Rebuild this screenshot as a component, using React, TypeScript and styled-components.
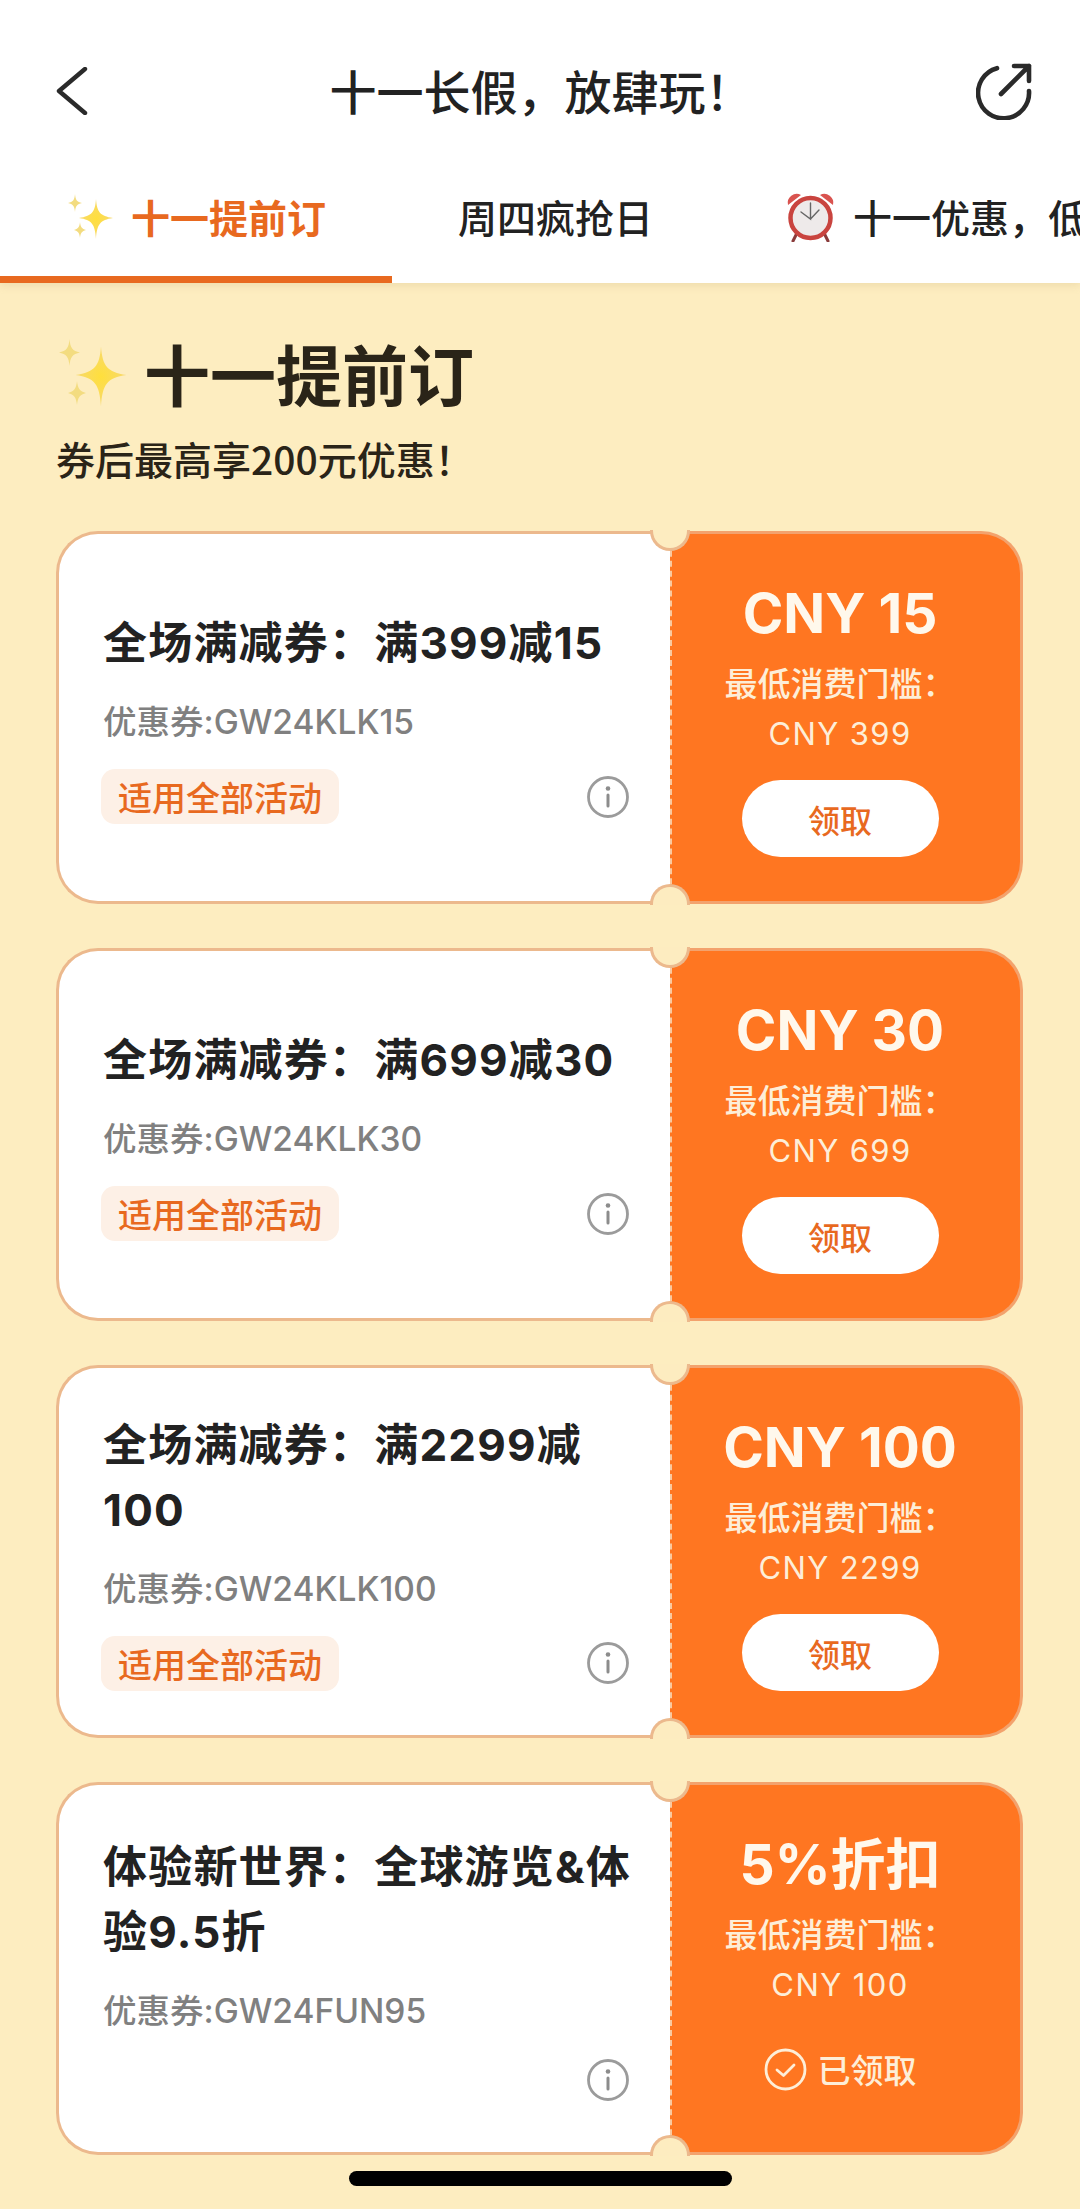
import React from "react";
import styled, { createGlobalStyle } from "styled-components";

const FONT = `Inter, "Noto Sans CJK SC", "Liberation Sans", sans-serif`;
const CJK = `"Noto Sans CJK SC", Inter, sans-serif`;

const Global = createGlobalStyle`
  html, body { margin: 0; padding: 0; background: #fdedc0; }
  body { font-family: ${FONT}; }
  * { box-sizing: border-box; }
`;

const Page = styled.div`
  position: relative;
  width: 1080px;
  height: 2209px;
  overflow: hidden;
  background: #fdedc0;
`;

const Top = styled.header`
  background: #fff;
  box-shadow: 0 3px 8px rgba(180, 150, 90, 0.18);
  position: relative;
`;

const NavBar = styled.div`
  height: 155px;
  padding: 27px 47px 0 56px;
  display: flex;
  align-items: center;
  justify-content: space-between;
`;

const NavTitle = styled.h1`
  margin: 0 0 3px 18px;
  font: 500 47px/60px ${CJK};
  color: #222;
`;

const TabRow = styled.nav`
  display: flex;
  height: 128px;
  overflow: hidden;
`;

const Tab = styled.div<{ $active?: boolean }>`
  flex: none;
  display: flex;
  align-items: center;
  gap: 17px;
  padding: 1px 66px 0;
  height: 128px;
  white-space: nowrap;
  font: ${(p) => (p.$active ? 700 : 500)} 39px/50px ${CJK};
  color: ${(p) => (p.$active ? "#e8691f" : "#222")};
  border-bottom: 7px solid ${(p) => (p.$active ? "#e8691f" : "transparent")};
`;

const Main = styled.main`
  padding: 49px 57px 0 56px;
`;

const SectionTitle = styled.h2`
  margin: 0;
  display: flex;
  align-items: center;
  gap: 16px;
  height: 80px;
  font: 700 66px/80px ${CJK};
  color: #2a2418;
`;

const Subtitle = styled.p`
  margin: 21px 0 48px;
  font: 500 39px/50px ${CJK};
  color: #2a2418;
`;

const List = styled.div`
  display: flex;
  flex-direction: column;
  gap: 44px;
`;

const Card = styled.article`
  position: relative;
  display: flex;
  height: 373px;
  width: 967px;
`;

const Left = styled.div`
  width: 614px;
  flex: none;
  background: #fff;
  border: 3px solid #ecb98d;
  border-right: none;
  border-radius: 42px 0 0 42px;
  padding: 0 36px 0 44px;
  display: flex;
  flex-direction: column;
  justify-content: center;
`;

const CardTitle = styled.h3`
  margin: 0;
  font: 700 44px/65px ${FONT};
  color: #222;
  letter-spacing: 1.2px;
`;

const Code = styled.div`
  margin-top: 26px;
  font: 500 33.5px/40px ${FONT};
  color: #808080;
`;

const Footer = styled.div`
  margin-top: 27px;
  padding-right: 4px;
  display: flex;
  align-items: center;
  justify-content: space-between;
`;

const Tag = styled.span`
  margin-left: -2px;
  padding: 0 17px;
  height: 55px;
  display: flex;
  align-items: center;
  border-radius: 14px;
  background: #fdf0e6;
  color: #e8691f;
  font: 500 34px/55px ${CJK};
`;

const Right = styled.div`
  flex: 1;
  background: #ff7621;
  border: 3px solid #f3a26d;
  border-left: 2px dashed #f9c9a0;
  border-radius: 0 42px 42px 0;
  display: flex;
  flex-direction: column;
  align-items: center;
  padding: 49px 12px 0 0;
  color: #fff6e6;
`;

const Amount = styled.div`
  font: 700 55px/60px ${FONT};
  color: #fff8ec;
  white-space: nowrap;
`;

const Threshold = styled.div`
  margin-top: 16px;
  text-align: center;
  font: 500 33px/50px ${FONT};
  color: #fdeed8;
  white-space: nowrap;
`;

const ThresholdValue = styled.div`
  font-weight: 400;
  font-size: 31px;
  letter-spacing: 1.4px;
`;

const Action = styled.div`
  margin-top: 21px;
  height: 77px;
  display: flex;
  align-items: center;
  justify-content: center;
`;

const ClaimButton = styled.button`
  width: 197px;
  height: 77px;
  border: none;
  border-radius: 39px;
  background: #fff;
  color: #e8691f;
  font: 500 32px/1 ${CJK};
`;

const Claimed = styled.div`
  display: flex;
  align-items: center;
  gap: 11px;
  font: 500 33px/1 ${CJK};
  color: #fdeed8;
`;

const Notch = styled.span<{ $edge: "top" | "bottom" }>`
  position: absolute;
  left: 594px;
  width: 40px;
  height: 21px;
  background: #fdecc0;
  border: 3px solid #ecb98d;
  ${(p) =>
    p.$edge === "top"
      ? "top: -1px; border-top: none; border-radius: 0 0 20px 20px;"
      : "bottom: -1px; border-bottom: none; border-radius: 20px 20px 0 0;"}
`;

const HomeBar = styled.div`
  position: absolute;
  left: 349px;
  top: 2171px;
  width: 383px;
  height: 15px;
  border-radius: 8px;
  background: #000;
`;

const Back = () => (
  <svg width="32" height="48" viewBox="0 0 32 48" fill="none">
    <path d="M29 2 L3 24 L29 46" stroke="#2a2a2a" strokeWidth="4.4" strokeLinecap="round" strokeLinejoin="round" />
  </svg>
);

const Share = () => (
  <svg width="57" height="57" viewBox="0 0 57 57" fill="none" stroke="#2a2a2a" strokeWidth="4.6" strokeLinecap="round" strokeLinejoin="round">
    <path d="M21 5.2 A25.5 25.5 0 1 0 53 28" />
    <path d="M25 31 L53 3 M38 3 H53 V18" />
  </svg>
);

const Sparkles = ({ size }: { size: number }) => (
  <svg width={size} height={size} viewBox="0 0 48 48" style={{ flex: "none" }}>
    <defs>
      <radialGradient id="sp" cx="50%" cy="50%" r="55%">
        <stop offset="0%" stopColor="#ffdf3c" />
        <stop offset="100%" stopColor="#f6d873" />
      </radialGradient>
    </defs>
    <path d="M30 7 C31 20 34 24 47 26 C34 28 31 32 30 47 C29 32 26 28 13 26 C26 24 29 20 30 7Z" fill="url(#sp)" />
    <path d="M9 2 C9.5 8 11 10 16 11 C11 12 9.5 14 9 20 C8.5 14 7 12 2 11 C7 10 8.5 8 9 2Z" fill="#f3dc80" />
    <path d="M14 30 C14.5 35 16 37 20 38 C16 39 14.5 41 14 46 C13.5 41 12 39 8 38 C12 37 13.5 35 14 30Z" fill="#f3dc80" />
  </svg>
);

const Alarm = () => (
  <svg width="51" height="51" viewBox="0 0 51 51" style={{ flex: "none" }}>
    <path d="M3 14 A9 9 0 0 1 16 4 Z" fill="#d9534f" />
    <path d="M48 14 A9 9 0 0 0 35 4 Z" fill="#d9534f" />
    <path d="M12 42 L8 50 M39 42 L43 50" stroke="#8a3b3b" strokeWidth="3" strokeLinecap="round" />
    <circle cx="25.5" cy="27" r="20" fill="#eeeaea" stroke="#c9443f" strokeWidth="4.5" />
    <path d="M25.5 12 V28 L16 21 M25.5 28 L34 19" fill="none" stroke="#666" strokeWidth="1.4" strokeLinecap="round" />
  </svg>
);

const Info = () => (
  <svg width="44" height="44" viewBox="0 0 44 44" fill="none">
    <circle cx="22" cy="22" r="19.5" stroke="#9b9b9b" strokeWidth="2.8" />
    <circle cx="22" cy="13.5" r="2.3" fill="#8c8c8c" />
    <path d="M22 20 V31" stroke="#8c8c8c" strokeWidth="3" strokeLinecap="round" />
  </svg>
);

const CheckCircle = () => (
  <svg width="43" height="43" viewBox="0 0 43 43" fill="none" stroke="#fdeed8" strokeWidth="2.8" strokeLinecap="round" strokeLinejoin="round">
    <circle cx="21.5" cy="21.5" r="19.5" />
    <path d="M13 22 L19.5 27.5 L30 17" />
  </svg>
);

type Coupon = {
  title: string;
  code: string;
  amount: string;
  min: string;
  tag?: boolean;
  claimed?: boolean;
};

const coupons: Coupon[] = [
  { title: "全场满减券：满399减15", code: "优惠券:GW24KLK15", amount: "CNY 15", min: "CNY 399", tag: true },
  { title: "全场满减券：满699减30", code: "优惠券:GW24KLK30", amount: "CNY 30", min: "CNY 699", tag: true },
  { title: "全场满减券：满2299减100", code: "优惠券:GW24KLK100", amount: "CNY 100", min: "CNY 2299", tag: true },
  { title: "体验新世界：全球游览&体验9.5折", code: "优惠券:GW24FUN95", amount: "5%折扣", min: "CNY 100", claimed: true },
];

export default function App() {
  return (
    <Page>
      <Global />
      <Top>
        <NavBar>
          <Back />
          <NavTitle>十一长假，放肆玩！</NavTitle>
          <Share />
        </NavBar>
        <TabRow>
          <Tab $active>
            <Sparkles size={48} />
            十一提前订
          </Tab>
          <Tab>周四疯抢日</Tab>
          <Tab>
            <Alarm />
            十一优惠，低
          </Tab>
        </TabRow>
      </Top>
      <Main>
        <SectionTitle>
          <Sparkles size={72} />
          十一提前订
        </SectionTitle>
        <Subtitle>券后最高享200元优惠！</Subtitle>
        <List>
          {coupons.map((c) => (
            <Card key={c.code}>
              <Left>
                <CardTitle>{c.title}</CardTitle>
                <Code>{c.code}</Code>
                <Footer>
                  {c.tag ? <Tag>适用全部活动</Tag> : <span />}
                  <Info />
                </Footer>
              </Left>
              <Right>
                <Amount>{c.amount}</Amount>
                <Threshold>
                  最低消费门槛：
                  <ThresholdValue>{c.min}</ThresholdValue>
                </Threshold>
                <Action>
                  {c.claimed ? (
                    <Claimed>
                      <CheckCircle />
                      已领取
                    </Claimed>
                  ) : (
                    <ClaimButton>领取</ClaimButton>
                  )}
                </Action>
              </Right>
              <Notch $edge="top" />
              <Notch $edge="bottom" />
            </Card>
          ))}
        </List>
      </Main>
      <HomeBar />
    </Page>
  );
}
